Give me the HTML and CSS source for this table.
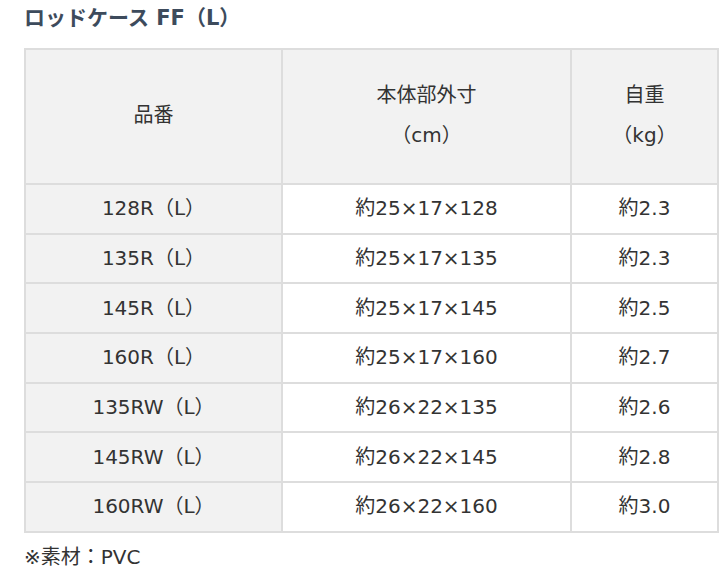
FILE: index.html
```html
<!DOCTYPE html>
<html lang="ja">
<head>
<meta charset="utf-8">
<link rel="stylesheet" href="styles.css">
</head>
<body>
<div class="page">
  <h2 class="title">ロッドケース FF（L）</h2>
  <table class="spec">
    <thead>
      <tr>
        <th class="c1">品番</th>
        <th class="c2">本体部外寸<br>（cm）</th>
        <th class="c3">自重<br>（kg）</th>
      </tr>
    </thead>
    <tbody>
      <tr><th>128R（L）</th><td>約25×17×128</td><td>約2.3</td></tr>
      <tr><th>135R（L）</th><td>約25×17×135</td><td>約2.3</td></tr>
      <tr><th>145R（L）</th><td>約25×17×145</td><td>約2.5</td></tr>
      <tr><th>160R（L）</th><td>約25×17×160</td><td>約2.7</td></tr>
      <tr><th>135RW（L）</th><td>約26×22×135</td><td>約2.6</td></tr>
      <tr><th>145RW（L）</th><td>約26×22×145</td><td>約2.8</td></tr>
      <tr><th>160RW（L）</th><td>約26×22×160</td><td>約3.0</td></tr>
    </tbody>
  </table>
  <p class="note">※素材：PVC</p>
</div>
</body>
</html>
```

FILE: styles.css
```css
html, body {
  margin: 0;
  padding: 0;
  background: #ffffff;
}
.page {
  padding: 0 0 0 24px;
  font-family: "DejaVu Sans", "Noto Sans CJK JP", sans-serif;
  color: #333333;
}
.title {
  margin: 0;
  padding-top: 5px;
  height: 48px;
  box-sizing: border-box;
  font-size: 21px;
  font-weight: bold;
  line-height: 26px;
  color: #3d4b5c;
}
.spec {
  border-collapse: collapse;
  width: 695px;
  table-layout: fixed;
  font-size: 20px;
}
.spec th, .spec td {
  border: 2px solid #dddddd;
  text-align: center;
  vertical-align: middle;
  font-weight: normal;
  padding: 0 0 4px 0;
  color: #333333;
}
.spec thead th {
  background: #f2f2f2;
  height: 129px;
  line-height: 40px;
}
.spec .c1 { width: 255px; }
.spec .c2 { width: 287px; }
.spec tbody th {
  background: #f2f2f2;
}
.spec tbody td {
  background: #ffffff;
}
.spec tbody tr {
  height: 49.7px;
}
.note {
  margin: 0;
  padding-top: 11px;
  font-size: 20px;
  line-height: 26px;
  color: #333333;
}
```
